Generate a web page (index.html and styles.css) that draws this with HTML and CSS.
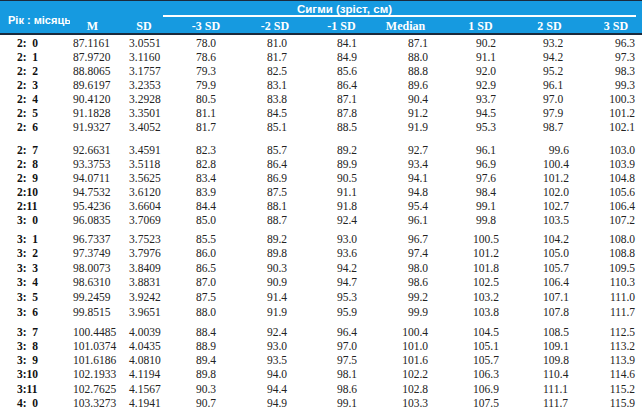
FILE: index.html
```html
<!DOCTYPE html>
<html lang="uk">
<head>
<meta charset="utf-8">
<title>Сигми (зріст, см)</title>
<link rel="stylesheet" href="styles.css">
</head>
<body>
<table class="growth">
  <colgroup>
    <col class="w-age"><col class="w-m"><col class="w-sd"><col class="w-n3"><col class="w-n2"><col class="w-n1"><col class="w-med"><col class="w-p1"><col class="w-p2"><col class="w-p3">
  </colgroup>
  <thead>
    <tr class="h1">
      <th rowspan="2" class="h-age">Рік : місяць</th>
      <th rowspan="2" class="h-m">M</th>
      <th rowspan="2" class="h-sd">SD</th>
      <th colspan="7" class="h-sig">Сигми (зріст, см)</th>
    </tr>
    <tr class="h2">
      <th class="h-n3">-3 SD</th>
      <th class="h-n2">-2 SD</th>
      <th class="h-n1">-1 SD</th>
      <th class="h-med">Median</th>
      <th class="h-p1">1 SD</th>
      <th class="h-p2">2 SD</th>
      <th class="h-p3">3 SD</th>
    </tr>
  </thead>
  <tbody class="g1">
    <tr><td>2:&#8199;0</td><td>87.1161</td><td>3.0551</td><td>78.0</td><td>81.0</td><td>84.1</td><td>87.1</td><td>90.2</td><td>93.2</td><td>96.3</td></tr>
    <tr><td>2:&#8199;1</td><td>87.9720</td><td>3.1160</td><td>78.6</td><td>81.7</td><td>84.9</td><td>88.0</td><td>91.1</td><td>94.2</td><td>97.3</td></tr>
    <tr><td>2:&#8199;2</td><td>88.8065</td><td>3.1757</td><td>79.3</td><td>82.5</td><td>85.6</td><td>88.8</td><td>92.0</td><td>95.2</td><td>98.3</td></tr>
    <tr><td>2:&#8199;3</td><td>89.6197</td><td>3.2353</td><td>79.9</td><td>83.1</td><td>86.4</td><td>89.6</td><td>92.9</td><td>96.1</td><td>99.3</td></tr>
    <tr><td>2:&#8199;4</td><td>90.4120</td><td>3.2928</td><td>80.5</td><td>83.8</td><td>87.1</td><td>90.4</td><td>93.7</td><td>97.0</td><td>100.3</td></tr>
    <tr><td>2:&#8199;5</td><td>91.1828</td><td>3.3501</td><td>81.1</td><td>84.5</td><td>87.8</td><td>91.2</td><td>94.5</td><td>97.9</td><td>101.2</td></tr>
    <tr><td>2:&#8199;6</td><td>91.9327</td><td>3.4052</td><td>81.7</td><td>85.1</td><td>88.5</td><td>91.9</td><td>95.3</td><td>98.7</td><td>102.1</td></tr>
  </tbody>
  <tbody class="g2">
    <tr><td>2:&#8199;7</td><td>92.6631</td><td>3.4591</td><td>82.3</td><td>85.7</td><td>89.2</td><td>92.7</td><td>96.1</td><td>&#8199;99.6</td><td>103.0</td></tr>
    <tr><td>2:&#8199;8</td><td>93.3753</td><td>3.5118</td><td>82.8</td><td>86.4</td><td>89.9</td><td>93.4</td><td>96.9</td><td>100.4</td><td>103.9</td></tr>
    <tr><td>2:&#8199;9</td><td>94.0711</td><td>3.5625</td><td>83.4</td><td>86.9</td><td>90.5</td><td>94.1</td><td>97.6</td><td>101.2</td><td>104.8</td></tr>
    <tr><td>2:10</td><td>94.7532</td><td>3.6120</td><td>83.9</td><td>87.5</td><td>91.1</td><td>94.8</td><td>98.4</td><td>102.0</td><td>105.6</td></tr>
    <tr><td>2:11</td><td>95.4236</td><td>3.6604</td><td>84.4</td><td>88.1</td><td>91.8</td><td>95.4</td><td>99.1</td><td>102.7</td><td>106.4</td></tr>
    <tr><td>3:&#8199;0</td><td>96.0835</td><td>3.7069</td><td>85.0</td><td>88.7</td><td>92.4</td><td>96.1</td><td>99.8</td><td>103.5</td><td>107.2</td></tr>
  </tbody>
  <tbody class="g3">
    <tr><td>3:&#8199;1</td><td>96.7337</td><td>3.7523</td><td>85.5</td><td>89.2</td><td>93.0</td><td>96.7</td><td>100.5</td><td>104.2</td><td>108.0</td></tr>
    <tr><td>3:&#8199;2</td><td>97.3749</td><td>3.7976</td><td>86.0</td><td>89.8</td><td>93.6</td><td>97.4</td><td>101.2</td><td>105.0</td><td>108.8</td></tr>
    <tr><td>3:&#8199;3</td><td>98.0073</td><td>3.8409</td><td>86.5</td><td>90.3</td><td>94.2</td><td>98.0</td><td>101.8</td><td>105.7</td><td>109.5</td></tr>
    <tr><td>3:&#8199;4</td><td>98.6310</td><td>3.8831</td><td>87.0</td><td>90.9</td><td>94.7</td><td>98.6</td><td>102.5</td><td>106.4</td><td>110.3</td></tr>
    <tr><td>3:&#8199;5</td><td>99.2459</td><td>3.9242</td><td>87.5</td><td>91.4</td><td>95.3</td><td>99.2</td><td>103.2</td><td>107.1</td><td>111.0</td></tr>
    <tr><td>3:&#8199;6</td><td>99.8515</td><td>3.9651</td><td>88.0</td><td>91.9</td><td>95.9</td><td>99.9</td><td>103.8</td><td>107.8</td><td>111.7</td></tr>
  </tbody>
  <tbody class="g4">
    <tr><td>3:&#8199;7</td><td>100.4485</td><td>4.0039</td><td>88.4</td><td>92.4</td><td>96.4</td><td>100.4</td><td>104.5</td><td>108.5</td><td>112.5</td></tr>
    <tr><td>3:&#8199;8</td><td>101.0374</td><td>4.0435</td><td>88.9</td><td>93.0</td><td>97.0</td><td>101.0</td><td>105.1</td><td>109.1</td><td>113.2</td></tr>
    <tr><td>3:&#8199;9</td><td>101.6186</td><td>4.0810</td><td>89.4</td><td>93.5</td><td>97.5</td><td>101.6</td><td>105.7</td><td>109.8</td><td>113.9</td></tr>
    <tr><td>3:10</td><td>102.1933</td><td>4.1194</td><td>89.8</td><td>94.0</td><td>98.1</td><td>102.2</td><td>106.3</td><td>110.4</td><td>114.6</td></tr>
    <tr><td>3:11</td><td>102.7625</td><td>4.1567</td><td>90.3</td><td>94.4</td><td>98.6</td><td>102.8</td><td>106.9</td><td>111.1</td><td>115.2</td></tr>
    <tr><td>4:&#8199;0</td><td>103.3273</td><td>4.1941</td><td>90.7</td><td>94.9</td><td>99.1</td><td>103.3</td><td>107.5</td><td>111.7</td><td>115.9</td></tr>
  </tbody>
</table>
</body>
</html>
```

FILE: styles.css
```css
html, body {
  margin: 0;
  padding: 0;
  background: #ffffff;
}

.growth {
  width: 642px;
  table-layout: fixed;
  border-collapse: collapse;
  border-spacing: 0;
  font-family: "Liberation Serif", "Times New Roman", serif;
  font-size: 11.5px;
  color: #222222;
}

.w-age { width: 70px; }
.w-m   { width: 55px; }
.w-sd  { width: 38px; }
.w-n3  { width: 77px; }
.w-n2  { width: 70px; }
.w-n1  { width: 70px; }
.w-med { width: 70px; }
.w-p1  { width: 70px; }
.w-p2  { width: 70px; }
.w-p3  { width: 52px; }

/* header */
.growth thead {
  background: #169ae0;
  color: #ffffff;
}
.growth thead tr.h1 {
  border-top: 1px solid #1b2a3c;
}
.growth thead tr.h2 {
  border-bottom: 2px solid #1b2a3c;
}
.growth th {
  padding: 0;
  white-space: nowrap;
  overflow: hidden;
}

.h-age {
  font-family: "Liberation Sans", Arial, sans-serif;
  font-size: 11px;
  font-weight: bold;
  line-height: 12px;
  text-align: left;
  vertical-align: top;
  padding: 13px 0 0 8px !important;
}

.h-sig {
  font-family: "Liberation Sans", Arial, sans-serif;
  font-size: 11.5px;
  font-weight: bold;
  line-height: 11px;
  text-align: left;
  padding: 3px 0 2px 134px !important;
  background: linear-gradient(#ffffff, #ffffff) left bottom / calc(100% - 6px) 2px no-repeat;
}

.h-m, .h-sd, .h2 th {
  font-family: "Liberation Serif", "Times New Roman", serif;
  font-size: 12px;
  font-weight: bold;
  line-height: 13px;
  vertical-align: bottom;
}
.h2 th {
  padding-top: 3px;
}

.h-m   { text-align: center; padding-right: 10px !important; }
.h-sd  { text-align: center; }
.h-n3  { text-align: center; padding-left: 9px !important; }
.h-n2  { text-align: center; }
.h-n1  { text-align: center; padding-right: 7px !important; }
.h-med { text-align: center; padding-right: 19px !important; }
.h-p1  { text-align: center; padding-right: 9px !important; }
.h-p2  { text-align: center; padding-right: 11px !important; }
.h-p3  { text-align: center; }

/* body */
.growth td {
  padding: 0;
  white-space: nowrap;
  line-height: 14px;
}
.growth td:nth-child(1)  { text-align: left; padding-left: 17px; font-weight: bold; color: #111111; }
.growth td:nth-child(2)  { text-align: left; padding-left: 3px; }
.growth td:nth-child(3)  { text-align: left; padding-left: 4px; }
.growth td:nth-child(4)  { text-align: center; padding-left: 9px; }
.growth td:nth-child(5)  { text-align: center; padding-left: 4px; }
.growth td:nth-child(6)  { text-align: center; padding-left: 4px; }
.growth td:nth-child(7)  { text-align: right; padding-right: 22px; }
.growth td:nth-child(8)  { text-align: center; padding-left: 2px; }
.growth td:nth-child(9)  { text-align: left; padding-left: 23px; }
.growth td:nth-child(10) { text-align: right; padding-right: 7px; }

.g1 tr:first-child td { padding-top: 1px; }
.g2 tr:first-child td { padding-top: 9px; }
.g3 td { line-height: 14.6px; }
.g3 tr:first-child td { padding-top: 4.7px; }
.g4 td { line-height: 14.2px; }
.g4 tr:first-child td { padding-top: 5.6px; }
```
